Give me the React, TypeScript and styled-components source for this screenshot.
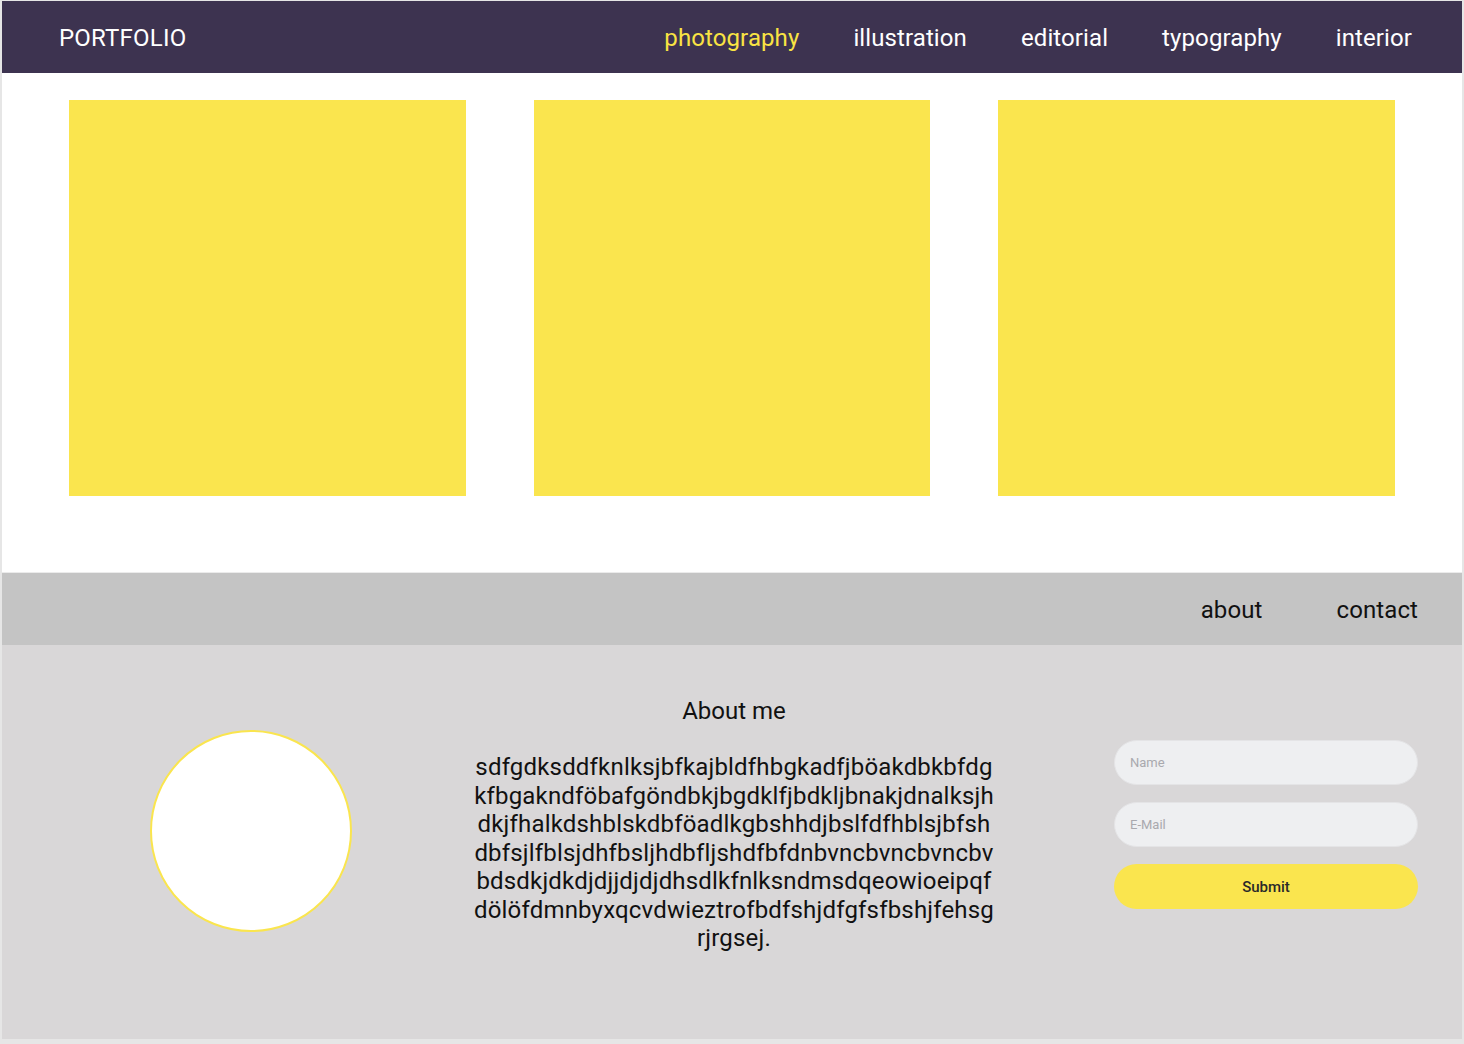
import React from 'react';
import styled, { createGlobalStyle } from 'styled-components';

const GlobalStyle = createGlobalStyle`
  html,
  body {
    margin: 0;
    background: #e6e6e6;
  }

  body {
    padding: 1px 2px 4px 2px;
    font-family: Roboto, 'Liberation Sans', sans-serif;
  }

  * {
    box-sizing: border-box;
  }
`;

const Page = styled.div`
  width: 1460px;
  background: #ffffff;
`;

const TopBar = styled.header`
  height: 72px;
  background: #3d3350;
  display: flex;
  align-items: center;
  justify-content: space-between;
  padding: 2px 50px 0 57px;
`;

const Brand = styled.div`
  color: #ffffff;
  font-size: 24px;
  letter-spacing: 0.2px;
`;

const NavList = styled.nav<{ $gap: number }>`
  display: flex;
  align-items: center;
  gap: ${(p) => p.$gap}px;
`;

const NavLink = styled.a<{ $active?: boolean; $dark?: boolean }>`
  font-size: 24px;
  letter-spacing: 0.1px;
  text-decoration: none;
  cursor: pointer;
  color: ${(p) => (p.$active ? '#f9e343' : p.$dark ? '#111111' : '#ffffff')};
`;

const Gallery = styled.section`
  display: grid;
  grid-template-columns: repeat(3, 1fr);
  gap: 68px;
  padding: 27px 67px 76px;
  border-bottom: 1px solid #ebebeb;
`;

const Tile = styled.div`
  height: 396px;
  background: #fae54e;
`;

const SubBar = styled.div`
  height: 72px;
  background: #c4c4c4;
  display: flex;
  align-items: center;
  justify-content: flex-end;
  padding: 2px 44px 0 0;
`;

const AboutSection = styled.section`
  height: 394px;
  background: #d9d7d8;
  display: grid;
  grid-template-columns: 202px 1fr 304px;
  align-items: start;
  padding: 0 44px 0 148px;
`;

const Avatar = styled.div`
  margin-top: 85px;
  width: 202px;
  height: 202px;
  border-radius: 50%;
  background: #ffffff;
  border: 2px solid #fae54e;
`;

const AboutText = styled.div`
  margin-top: 52px;
  margin-left: 2px;
  text-align: center;
  color: #111111;
  font-size: 24px;
`;

const AboutTitle = styled.h2`
  margin: 0 0 28px;
  font-size: 24px;
  font-weight: 400;
  line-height: 28px;
`;

const Paragraph = styled.p`
  margin: 0;
  line-height: 28.5px;
  letter-spacing: 0.18px;
`;

const Line = styled.span`
  display: block;
`;

const Form = styled.form`
  margin-top: 95px;
  display: flex;
  flex-direction: column;
  gap: 17px;
`;

const Field = styled.input`
  height: 45px;
  border-radius: 23px;
  border: 1px solid #e4e4e6;
  background: #eeeff1;
  padding: 0 15px;
  font-family: Roboto, 'Liberation Sans', sans-serif;
  font-size: 13px;
  outline: none;

  &::placeholder {
    color: #a9a9ae;
  }
`;

const SubmitButton = styled.button`
  height: 45px;
  border-radius: 23px;
  border: none;
  background: #fae54e;
  color: #2a2a2a;
  font-family: Roboto, 'Liberation Sans', sans-serif;
  font-size: 15px;
  font-weight: 500;
  cursor: pointer;
`;

const topLinks = ['photography', 'illustration', 'editorial', 'typography', 'interior'];

const lines = [
  'sdfgdksddfknlksjbfkajbldfhbgkadfjböakdbkbfdg',
  'kfbgakndföbafgöndbkjbgdklfjbdkljbnakjdnalksjh',
  'dkjfhalkdshblskdbföadlkgbshhdjbslfdfhblsjbfsh',
  'dbfsjlfblsjdhfbsljhdbfljshdfbfdnbvncbvncbvncbv',
  'bdsdkjdkdjdjjdjdjdhsdlkfnlksndmsdqeowioeipqf',
  'dölöfdmnbyxqcvdwieztrofbdfshjdfgfsfbshjfehsg',
  'rjrgsej.',
];

export default function App() {
  return (
    <>
      <GlobalStyle />
      <Page>
        <TopBar>
          <Brand>PORTFOLIO</Brand>
          <NavList $gap={54}>
            {topLinks.map((l, i) => (
              <NavLink key={l} $active={i === 0}>
                {l}
              </NavLink>
            ))}
          </NavList>
        </TopBar>

        <Gallery>
          <Tile />
          <Tile />
          <Tile />
        </Gallery>

        <SubBar>
          <NavList $gap={74}>
            <NavLink $dark>about</NavLink>
            <NavLink $dark>contact</NavLink>
          </NavList>
        </SubBar>

        <AboutSection>
          <Avatar />
          <AboutText>
            <AboutTitle>About me</AboutTitle>
            <Paragraph>
              {lines.map((l) => (
                <Line key={l}>{l}</Line>
              ))}
            </Paragraph>
          </AboutText>
          <Form onSubmit={(e) => e.preventDefault()}>
            <Field placeholder="Name" />
            <Field placeholder="E-Mail" />
            <SubmitButton type="submit">Submit</SubmitButton>
          </Form>
        </AboutSection>
      </Page>
    </>
  );
}
